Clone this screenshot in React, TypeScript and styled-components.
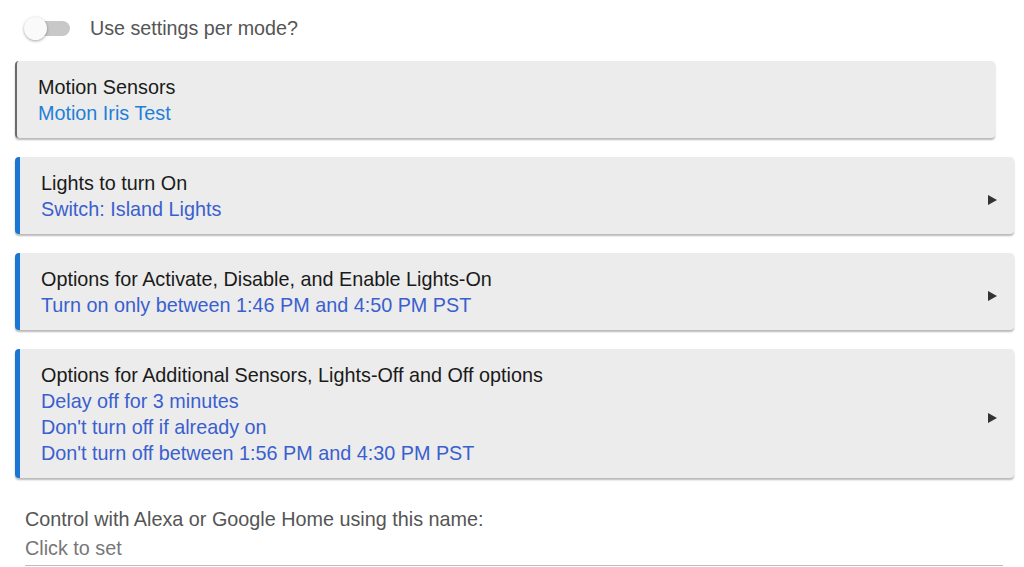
import React from "react";
import styled, { createGlobalStyle } from "styled-components";

const GlobalStyle = createGlobalStyle`
  body {
    margin: 0;
    background: #ffffff;
    font-family: "Liberation Sans", Arial, sans-serif;
  }
`;

const Page = styled.div`
  display: flex;
  flex-direction: column;
  padding: 16px 10px 0 15px;
  width: 1024px;
  box-sizing: border-box;
`;

const ToggleRow = styled.div`
  display: flex;
  align-items: center;
  gap: 20px;
  padding-left: 10px;
  height: 24px;
  margin-bottom: 21px;
`;

const Track = styled.div`
  position: relative;
  width: 45px;
  height: 15px;
  border-radius: 8px;
  background: #c8c8c8;
`;

const Thumb = styled.div`
  position: absolute;
  left: -1px;
  top: -4px;
  width: 23px;
  height: 23px;
  border-radius: 50%;
  background: #fafafa;
  box-shadow: 0 1px 3px rgba(0, 0, 0, 0.35);
`;

const ToggleLabel = styled.span`
  font-size: 19.7px;
  color: #555;
`;

const Card = styled.div<{ $accent: string; $border: number; $trim: number }>`
  display: flex;
  align-items: center;
  margin-right: ${(p) => p.$trim}px;
  margin-bottom: 19px;
  padding: 13px 17px 12px 21px;
  background: #ececec;
  border-left: ${(p) => p.$border}px solid ${(p) => p.$accent};
  border-radius: 4px;
  box-shadow: 0 2px 2px rgba(0, 0, 0, 0.28);
`;

const CardBody = styled.div`
  flex: 1;
  display: flex;
  flex-direction: column;
`;

const Title = styled.div`
  font-size: 19.8px;
  line-height: 26px;
  color: #1a1a1a;
`;

const Detail = styled.div<{ $color: string }>`
  font-size: 19.8px;
  line-height: 26px;
  color: ${(p) => p.$color};
`;

const Arrow = styled.div`
  width: 0;
  height: 0;
  margin-top: 7px;
  border-top: 5px solid transparent;
  border-bottom: 5px solid transparent;
  border-left: 9px solid #333;
`;

const NameField = styled.div`
  display: flex;
  flex-direction: column;
  margin: 8px 11px 0 10px;
`;

const FieldLabel = styled.div`
  font-size: 19.8px;
  line-height: 29px;
  color: #555;
`;

const FieldInput = styled.div`
  font-size: 19.8px;
  line-height: 29px;
  color: #777;
  border-bottom: 1px solid #bdbdbd;
  padding-bottom: 2px;
`;

type Section = {
  title: string;
  lines: string[];
};

const sections: Section[] = [
  { title: "Lights to turn On", lines: ["Switch: Island Lights"] },
  {
    title: "Options for Activate, Disable, and Enable Lights-On",
    lines: ["Turn on only between 1:46 PM and 4:50 PM PST"],
  },
  {
    title: "Options for Additional Sensors, Lights-Off and Off options",
    lines: [
      "Delay off for 3 minutes",
      "Don't turn off if already on",
      "Don't turn off between 1:56 PM and 4:30 PM PST",
    ],
  },
];

export default function App() {
  return (
    <>
      <GlobalStyle />
      <Page>
        <ToggleRow>
          <Track>
            <Thumb />
          </Track>
          <ToggleLabel>Use settings per mode?</ToggleLabel>
        </ToggleRow>

        <Card $accent="#6b6b6b" $border={2} $trim={19}>
          <CardBody>
            <Title>Motion Sensors</Title>
            <Detail $color="#1e7fd8">Motion Iris Test</Detail>
          </CardBody>
        </Card>

        {sections.map((s) => (
          <Card key={s.title} $accent="#1976d2" $border={5} $trim={0}>
            <CardBody>
              <Title>{s.title}</Title>
              {s.lines.map((l) => (
                <Detail key={l} $color="#3a5fcf">
                  {l}
                </Detail>
              ))}
            </CardBody>
            <Arrow />
          </Card>
        ))}

        <NameField>
          <FieldLabel>Control with Alexa or Google Home using this name:</FieldLabel>
          <FieldInput>Click to set</FieldInput>
        </NameField>
      </Page>
    </>
  );
}
